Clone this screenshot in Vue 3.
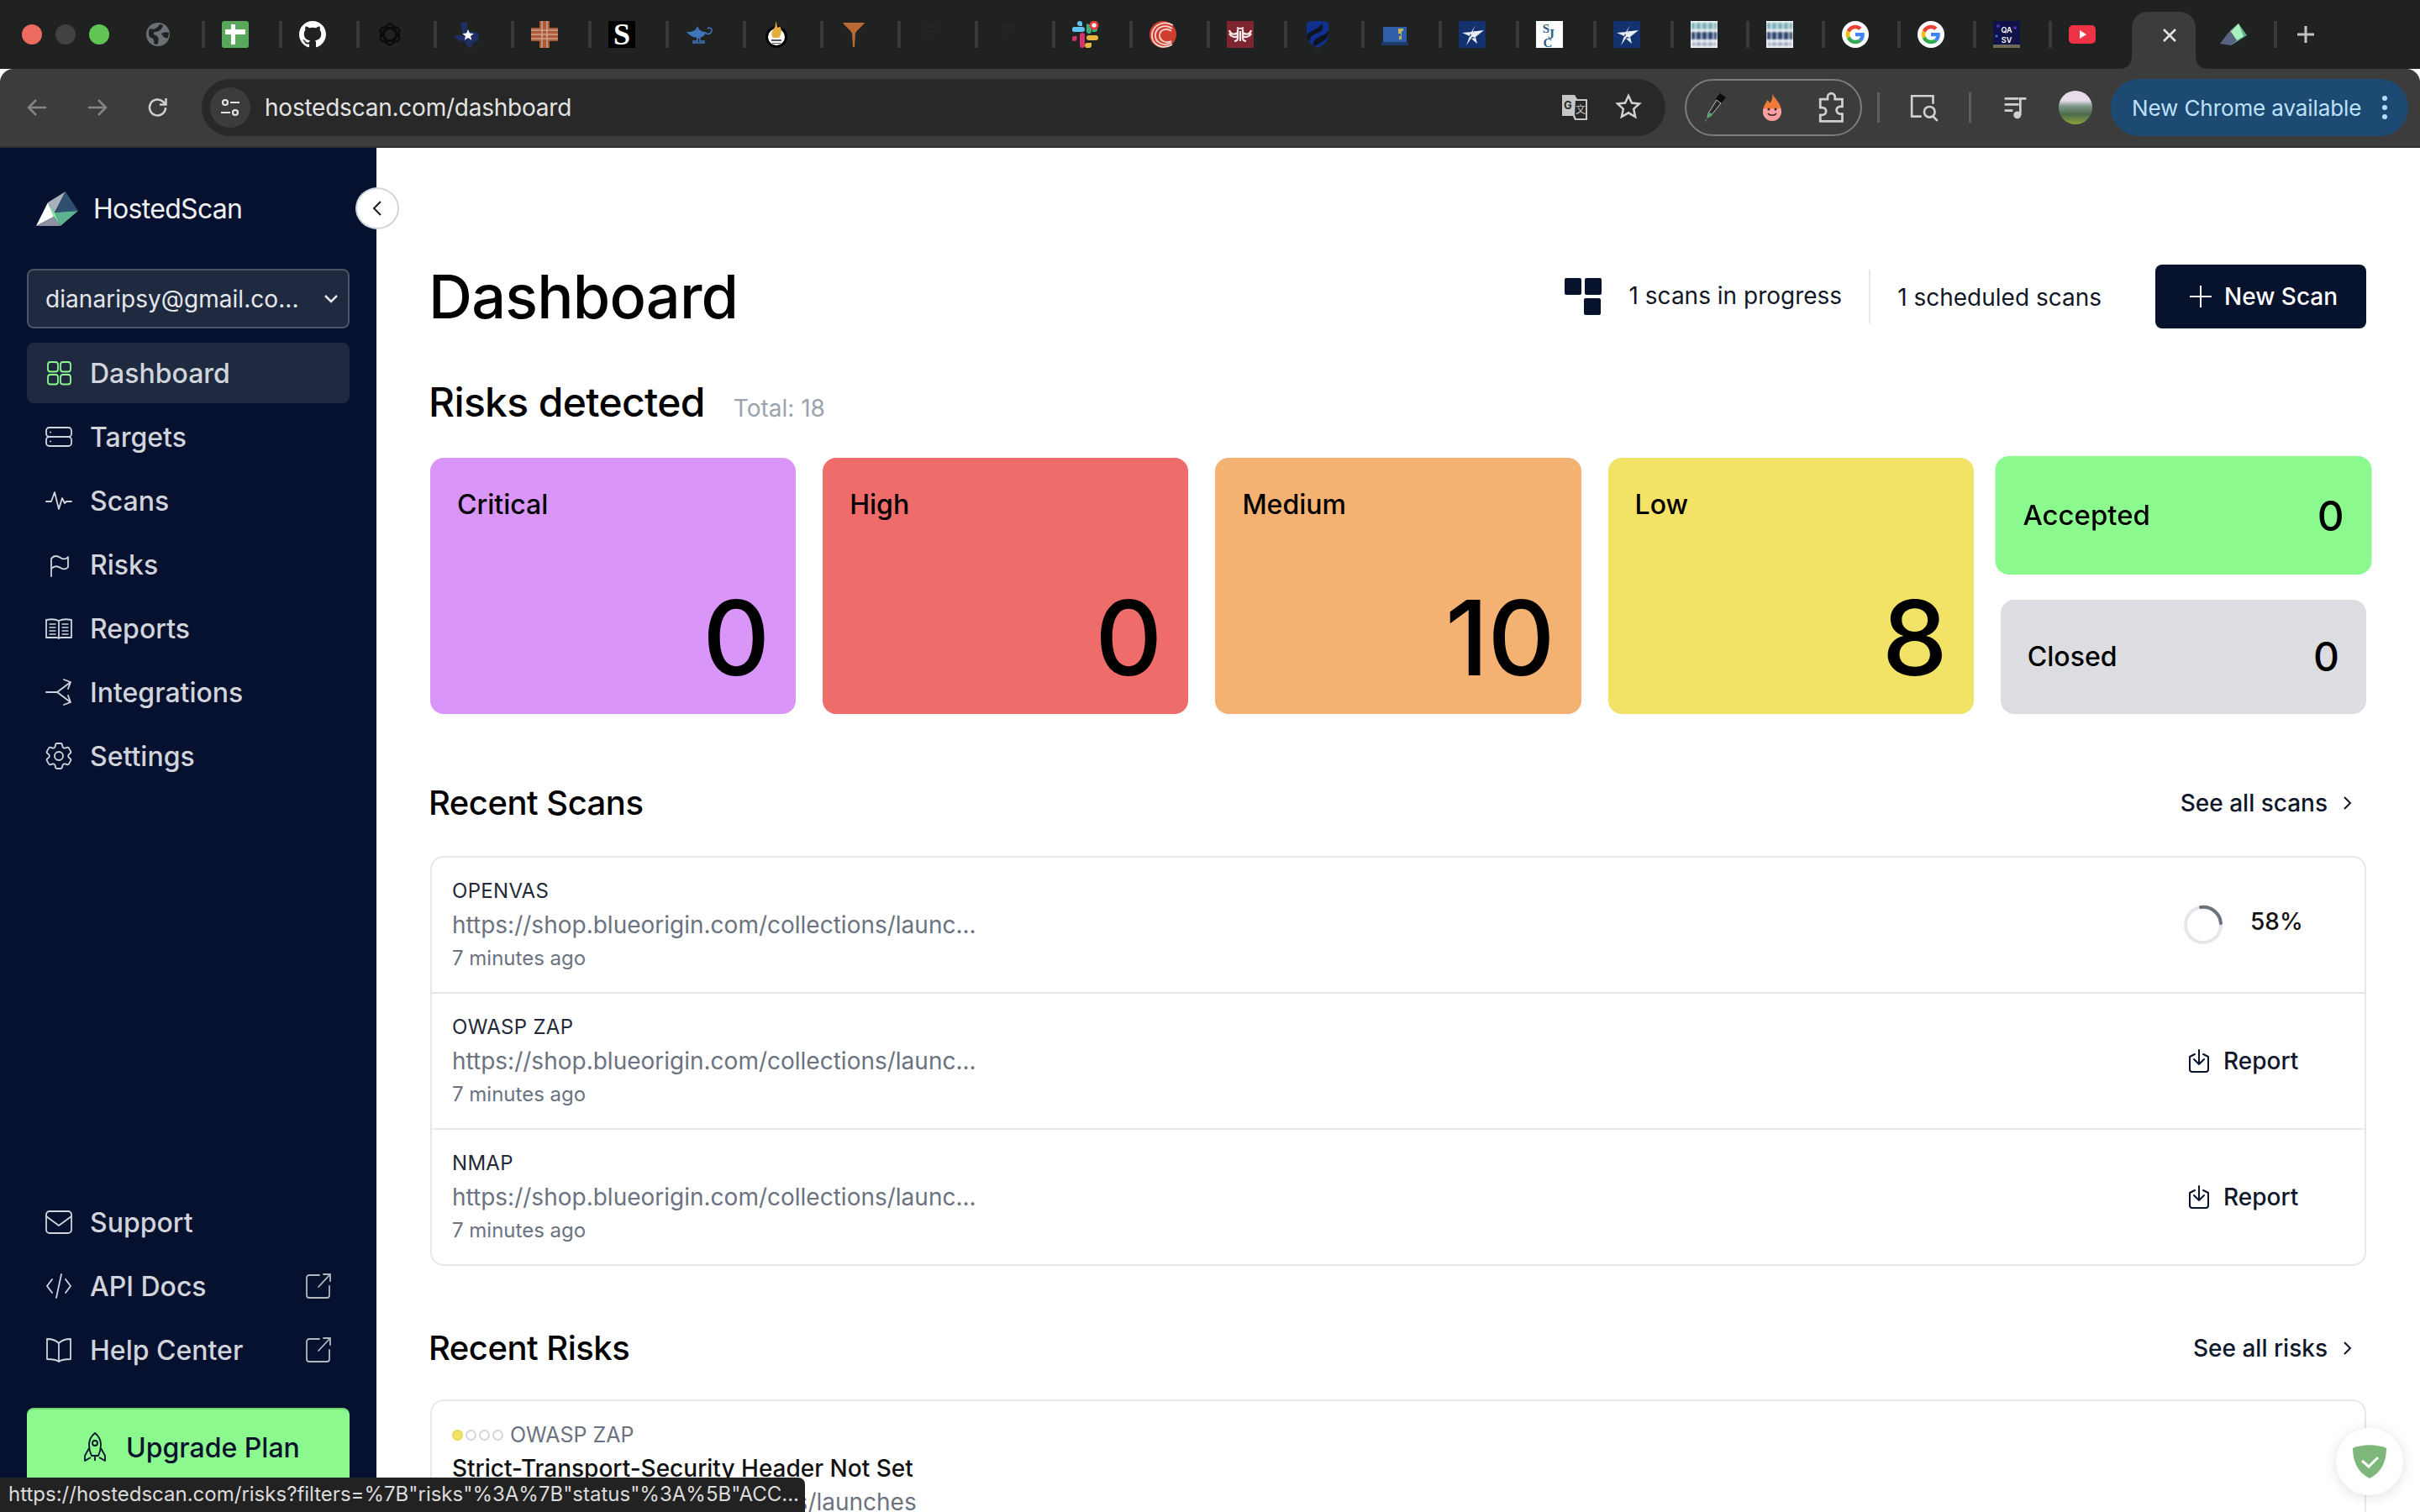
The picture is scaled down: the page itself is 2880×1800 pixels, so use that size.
<template>
  <div class="screen">
    <!-- favicon sprites -->
    <svg class="sprites" width="0" height="0">
      <defs>
        <symbol id="f-globe" viewBox="0 0 32 32">
          <circle cx="16" cy="16" r="14" fill="#6c6f74" />
          <path d="M6 9c5 2 9 0 12-5l4 1c-1 5-6 8-9 8s-3 3 0 4c4 1 5 6 2 11l-4-1c1-3 0-6-3-7s-4-5-2-11z" fill="#202221" />
          <path d="M20 15c3-2 6-2 9-1l-1 6c-2 1-4 0-5-1s-3-3-3-4z" fill="#202221" />
        </symbol>
        <symbol id="f-plus" viewBox="0 0 32 32">
          <rect width="32" height="32" rx="3" fill="#58a95c" />
          <path d="M11 4h5v6h12v6H16v12h-5V16H4v-6h7z" fill="#fff" />
        </symbol>
        <symbol id="f-github" viewBox="0 0 16 16">
          <path fill="#fff" d="M8 0C3.58 0 0 3.58 0 8c0 3.54 2.29 6.53 5.47 7.59.4.07.55-.17.55-.38 0-.19-.01-.82-.01-1.49-2.01.37-2.53-.49-2.69-.94-.09-.23-.48-.94-.82-1.13-.28-.15-.68-.52-.01-.53.63-.01 1.08.58 1.23.82.72 1.21 1.87.87 2.33.66.07-.52.28-.87.51-1.07-1.78-.2-3.64-.89-3.64-3.95 0-.87.31-1.59.82-2.15-.08-.2-.36-1.02.08-2.12 0 0 .67-.21 2.2.82.64-.18 1.32-.27 2-.27.68 0 1.36.09 2 .27 1.53-1.04 2.2-.82 2.2-.82.44 1.1.16 1.92.08 2.12.51.56.82 1.27.82 2.15 0 3.07-1.87 3.75-3.65 3.95.29.25.54.73.54 1.48 0 1.07-.01 1.93-.01 2.2 0 .21.15.46.55.38A8.013 8.013 0 0016 8c0-4.42-3.58-8-8-8z" />
        </symbol>
        <symbol id="f-openai" viewBox="0 0 32 32">
          <g fill="none" stroke="#0b0b0b" stroke-width="2">
            <ellipse cx="16" cy="16" rx="7" ry="12.5" />
            <ellipse cx="16" cy="16" rx="7" ry="12.5" transform="rotate(60 16 16)" />
            <ellipse cx="16" cy="16" rx="7" ry="12.5" transform="rotate(120 16 16)" />
          </g>
        </symbol>
        <symbol id="f-texas" viewBox="0 0 32 32">
          <path d="M8 2h8v9l11 3 3 2-1 7-7 4-1 5-5-2-3-6-3-1-3 2-5-6-2-2h11z" fill="#1f2f66" />
          <path d="M17 10l1.900 4.600 4.900.3-3.800 3.100 1.300 4.800-4.300-2.700-4.200 2.700 1.200-4.800-3.800-3.100 5-.3z" fill="#fff" />
        </symbol>
        <symbol id="f-brick" viewBox="0 0 32 32">
          <path d="M10 0h12v8h10v16H22v8H10v-8H0V8h10z" fill="#ab5a3a" />
          <path d="M0 11h32M0 16h32M0 21h32M13 0v32M19 0v32" stroke="#cfa48c" stroke-width="1.500" />
        </symbol>
        <symbol id="f-s" viewBox="0 0 32 32">
          <rect width="32" height="32" fill="#000" />
          <text x="16" y="28" text-anchor="middle" font-family="Liberation Serif, serif" font-weight="700" font-size="36" fill="#fff">S</text>
        </symbol>
        <symbol id="f-lamp" viewBox="0 0 32 32">
          <path d="M1 13h3c3 0 6-1 8-3l2-4 2 4c2 2 4 3 8 3-1 5-5 7-9 7s-10-2-14-7z" fill="#3f76bb" />
          <path d="M14 20h3v4h5v2H9v-2h5zM24 14c2 3 6 1 7-2s-3-5-5-3" fill="none" stroke="#3f76bb" stroke-width="1.500" />
        </symbol>
        <symbol id="f-torch" viewBox="0 0 32 32">
          <circle cx="16" cy="19" r="13" fill="#000" />
          <circle cx="16" cy="19" r="10" fill="#fff" />
          <path d="M15 0c2 4 1 6 3 8 2-1 2-2 3 0 2 4 0 10-2 12h-7c-3-4-1-8 1-11 2-2 2-5 2-9z" fill="#e2ad3d" />
          <path d="M10 22h12v2H10zM11 26h10v1H11z" fill="#555" />
        </symbol>
        <symbol id="f-tee" viewBox="0 0 32 32">
          <path d="M3 2h26c-3 5-9 8-11 13l-1 15c0 2-2 2-2 0l-1-15C12 10 6 7 3 2z" fill="#b86a35" />
        </symbol>
        <symbol id="f-dark" viewBox="0 0 32 32">
          <path d="M8 6h16M10 12h10M8 18h8" stroke="#242625" stroke-width="3" />
        </symbol>
        <symbol id="f-slack" viewBox="0 0 32 32">
          <path d="M2 13h10a3 3 0 0 0 0-6H4a3 3 0 0 0-2 6z" fill="#5ec3ee" />
          <path d="M9 0a3 3 0 0 0 0 6h3V3a3 3 0 0 0-3-3z" fill="#5ec3ee" />
          <path d="M17 3v9a3 3 0 0 0 6 0V5" fill="#3bb07f" />
          <path d="M25 10h3a3 3 0 0 1 0 6h-3z" fill="#3bb07f" transform="translate(-1 -3)" />
          <circle cx="26" cy="5" r="5.500" fill="#e23b3b" />
          <circle cx="26" cy="5" r="2.600" fill="#fff" />
          <path d="M20 17h8a3 3 0 0 1 0 6h-8a3 3 0 0 1 0-6z" fill="#e8b63e" />
          <path d="M17 26a3 3 0 0 0 3 6 3 3 0 0 0 3-3v-3z" fill="#e8b63e" />
          <path d="M9 17a3 3 0 0 1 6 0v12a3 3 0 0 1-6 0z" fill="#d6336c" />
          <path d="M3 17h3v3a3 3 0 1 1-3-3z" fill="#d6336c" transform="translate(-0.500 1)" />
        </symbol>
        <symbol id="f-lifeline" viewBox="0 0 32 32">
          <circle cx="16" cy="16" r="16" fill="#cf3d2e" />
          <g fill="none" stroke="#f6d9d3" stroke-width="1.800">
            <path d="M28 5C18-1 4 4 3 16s12 19 24 12" />
            <path d="M27 9C19 3 8 7 7 16s9 15 19 10" />
            <path d="M26 12c-5-4-14-2-14 5s8 10 14 7" />
          </g>
        </symbol>
        <symbol id="f-wt" viewBox="0 0 32 32">
          <rect width="32" height="32" fill="#7d2631" />
          <g fill="none" stroke="#f5e9e9" stroke-width="2.200">
            <path d="M3 11c1 5 6 6 10 3M29 11c-1 5-6 6-10 3M3 15c2 4 7 5 10 3M29 15c-2 4-7 5-10 3" />
            <path d="M12 8c2 1 6 1 8 0M13 10v10c0 3-2 4-4 4M19 10v10c0 3 2 4 4 4M16 12v12" />
          </g>
        </symbol>
        <symbol id="f-shield" viewBox="0 0 32 32">
          <path d="M3 2c8-3 18-3 26 0v15c0 7-6 12-13 15C9 29 3 24 3 17z" fill="#10308f" />
          <path d="M3 17C8 10 17 11 21 3c3 6-1 10-7 12-5 2-8 5-7 10-3-3-4-5-4-8zM11 29c-1-7 5-9 11-12 3-1 5-3 7-6 0 9-3 11-8 14-3 2-6 3-8 5z" fill="#10141f" />
        </symbol>
        <symbol id="f-hat" viewBox="0 0 32 32">
          <rect x="2" y="7" width="28" height="18" fill="#2f5fa8" />
          <rect y="25" width="32" height="4" fill="#1c3a68" />
          <path d="M20 9h6v3h-2v10h-3v-4h2v-3h-3z" fill="#c3b25b" />
        </symbol>
        <symbol id="f-star" viewBox="0 0 32 32">
          <rect width="32" height="32" fill="#14316f" />
          <path d="M20 5l-3.500 7.500L30 11l-10 8 2 8-7-6 5-1-4-1-7 10 4-11-9-4 11-1z" fill="#e8edf5" />
          <path d="M14 15l-2 5 3-3z" fill="#14316f" />
        </symbol>
        <symbol id="f-sjc" viewBox="0 0 32 32">
          <rect width="32" height="32" fill="#fff" />
          <text x="12" y="14" text-anchor="middle" font-family="Liberation Serif, serif" font-weight="700" font-size="15" fill="#2c5b8a">S</text>
          <text x="18" y="21" text-anchor="middle" font-family="Liberation Serif, serif" font-weight="700" font-size="16" fill="#2c5b8a">J</text>
          <text x="14" y="31" text-anchor="middle" font-family="Liberation Serif, serif" font-weight="700" font-size="15" fill="#2c5b8a">C</text>
        </symbol>
        <symbol id="f-health" viewBox="0 0 32 32">
          <rect width="32" height="32" fill="#f4f7f8" />
          <g class="blurred">
            <rect x="1" y="2" width="30" height="8" fill="#7fb0ba" />
            <rect x="1" y="13" width="30" height="9" fill="#2e4470" />
            <rect x="2" y="25" width="28" height="5" fill="#a3adc0" />
            <path d="M6 0v32M13 0v32M20 0v32M27 0v32" stroke="#f4f7f8" stroke-width="1.500" />
          </g>
        </symbol>
        <symbol id="f-google" viewBox="-10 -10 68 68">
          <circle cx="24" cy="24" r="34" fill="#fff" />
          <path fill="#ea4335" d="M24 9.500c3.540 0 6.710 1.220 9.210 3.600l6.850-6.850C35.900 2.380 30.470 0 24 0 14.620 0 6.510 5.380 2.560 13.220l7.980 6.190C12.430 13.720 17.740 9.500 24 9.500z" />
          <path fill="#4285f4" d="M46.980 24.550c0-1.570-.15-3.090-.38-4.550H24v9.020h12.940c-.58 2.960-2.260 5.480-4.780 7.180l7.730 6c4.510-4.180 7.090-10.360 7.090-17.650z" />
          <path fill="#fbbc05" d="M10.530 28.590c-.48-1.450-.76-2.990-.76-4.590s.27-3.140.76-4.590l-7.980-6.190C.92 16.460 0 20.120 0 24c0 3.880.92 7.540 2.560 10.780l7.970-6.190z" />
          <path fill="#34a853" d="M24 48c6.480 0 11.930-2.130 15.890-5.810l-7.730-6c-2.150 1.450-4.920 2.300-8.160 2.300-6.260 0-11.570-4.220-13.470-9.910l-7.980 6.190C6.510 42.620 14.620 48 24 48z" />
        </symbol>
        <symbol id="f-qa" viewBox="0 0 32 32">
          <rect width="32" height="32" fill="#10124a" />
          <circle cx="6" cy="6" r="2" fill="#4a2fa8" />
          <circle cx="26" cy="8" r="2" fill="#4a2fa8" />
          <circle cx="4" cy="18" r="1.500" fill="#4f6fd0" />
          <rect y="28" width="32" height="4" fill="#6f6a55" />
          <text x="16" y="14" text-anchor="middle" font-family="Inter, sans-serif" font-weight="600" font-size="9" fill="#fff">QA</text>
          <text x="16" y="26" text-anchor="middle" font-family="Inter, sans-serif" font-weight="600" font-size="9" fill="#fff">SV</text>
        </symbol>
        <symbol id="f-yt" viewBox="0 0 32 32">
          <rect y="5" width="32" height="22" rx="5" fill="#ee3344" />
          <path d="M13 11l8 5-8 5z" fill="#fff" />
        </symbol>
        <symbol id="f-prism" viewBox="0 0 32 32">
          <path d="M22 3l10 14-19 12z" fill="#5fb08f" />
          <path d="M22 3L12 12l8 11 8-5z" fill="#a9f2bb" />
          <path d="M22 3L0 27l12-15z" fill="#8a93a8" />
          <path d="M0 27l13 2 7-6-8-11z" fill="#5a6480" />
        </symbol>
      </defs>
    </svg>

    <!-- browser chrome -->
    <div class="tabstrip">
      <div class="lights">
        <span class="light red"></span>
        <span class="light off"></span>
        <span class="light green"></span>
      </div>
      <div v-for="(t, i) in tabs" :key="i" class="tab" :class="{ narrow: t.narrow, last: t.last }">
        <svg class="fav"><use :href="'#f-' + t.icon" /></svg>
      </div>
      <div class="active-tab">
        <svg class="tab-shape" width="106" height="70" viewBox="0 0 106 70">
          <path d="M0 70c10 0 15-6 15-16V22C15 10 23 2 35 2h36c12 0 20 8 20 20v32c0 10 5 16 15 16z" fill="#3c3c3c" />
        </svg>
        <svg class="tab-close" width="18" height="18" viewBox="0 0 18 18">
          <path d="M2 2l14 14M16 2L2 16" stroke="#e3e3e3" stroke-width="2.500" />
        </svg>
      </div>
      <div class="tab after-active">
        <svg class="fav"><use href="#f-prism" /></svg>
      </div>
      <svg class="newtab" width="22" height="22" viewBox="0 0 22 22">
        <path d="M11 1v20M1 11h20" stroke="#c4c4c4" stroke-width="3" />
      </svg>
    </div>

    <div class="toolbar">
      <div class="tb-btn">
        <svg width="28" height="28" viewBox="0 0 28 28" fill="none" stroke="#858585" stroke-width="2.500"><path d="M25 14H4M13 5l-9 9 9 9" /></svg>
      </div>
      <div class="tb-btn">
        <svg width="28" height="28" viewBox="0 0 28 28" fill="none" stroke="#858585" stroke-width="2.500"><path d="M3 14h21M15 5l9 9-9 9" /></svg>
      </div>
      <div class="tb-btn">
        <svg width="28" height="28" viewBox="0 0 28 28" fill="none" stroke="#d0d0d0" stroke-width="2.500"><path d="M23 14a9.500 9.500 0 1 1-3-7l3 3" /><path d="M23.500 3v7.500H16" /></svg>
      </div>
      <div class="omnibox">
        <div class="site-info">
          <svg width="26" height="26" viewBox="0 0 26 26" fill="none" stroke="#e3e3e3" stroke-width="2.200">
            <circle cx="7" cy="7" r="3" /><path d="M13 7h11M2 19h11" /><circle cx="19" cy="19" r="3" />
          </svg>
        </div>
        <span class="url">hostedscan.com/dashboard</span>
        <div class="omni-right">
          <div class="omni-btn">
            <svg width="34" height="34" viewBox="0 0 34 34">
              <path d="M2 2h15l3 5h12v25H17l-2-5H2z" fill="#c6c6c6" />
              <path d="M17 8h14v23H18l-2-5z" fill="#282828" stroke="#c6c6c6" stroke-width="2" />
              <text x="9" y="19" text-anchor="middle" font-family="Inter, sans-serif" font-weight="700" font-size="13" fill="#282828">G</text>
              <text x="24" y="24" text-anchor="middle" font-family="Noto Sans CJK SC, sans-serif" font-size="12" fill="#c6c6c6">文</text>
            </svg>
          </div>
          <div class="omni-btn">
            <svg width="32" height="32" viewBox="0 0 32 32" fill="none" stroke="#d0d0d0" stroke-width="2.500">
              <path d="M16 3l3.900 8.500 9.100 1-6.800 6.200 1.900 9.300-8.100-4.700L7.900 28l1.900-9.300L3 12.500l9.100-1z" />
            </svg>
          </div>
        </div>
      </div>
      <div class="ext-pill">
        <div class="ext">
          <svg width="30" height="36" viewBox="0 0 30 36">
            <path d="M21 1l7 5-5 6-2 1-5-4 1-3z" fill="#0c0c0c" />
            <path d="M17 9l5 4L10 28l-4 2 1-5z" fill="#2a2a2a" stroke="#bcbcbc" stroke-width="1" />
            <path d="M9 24l3 2-3 3-3 1 1-4zM6 30l-2 5-1-1z" fill="#4fa06a" />
          </svg>
        </div>
        <div class="ext">
          <svg width="28" height="36" viewBox="0 0 28 36">
            <path d="M14 1c2 6 11 11 11 22a11 11 0 0 1-22 0C3 16 7 13 8 9c2 1 3 3 3 4 3-3 4-7 3-12z" fill="#f0793a" />
            <path d="M3 23a11 11 0 0 0 22 0c0-2 0-2-1-4H4c-1 2-1 2-1 4z" fill="#f6a6b4" opacity=".85" />
            <circle cx="10" cy="20" r="1.500" fill="#40231a" /><circle cx="18" cy="20" r="1.500" fill="#40231a" />
            <path d="M9 25c2 3 8 3 10 0" fill="none" stroke="#40231a" stroke-width="1.500" />
          </svg>
        </div>
        <div class="ext puzzle">
          <svg width="40" height="40" viewBox="0 0 32 32" fill="none" stroke="#d0d0d0" stroke-width="2.200">
            <path d="M5 8h7V6a3.500 3.500 0 0 1 7 0v2h7v7h-2a3 3 0 0 0 0 7h2v7H5v-6h2a3.500 3.500 0 0 0 0-7H5z" />
          </svg>
        </div>
      </div>
      <span class="tb-sep first"></span>
      <svg class="lens" width="38" height="38" viewBox="0 0 36 36" fill="none" stroke="#d0d0d0" stroke-width="2.500">
        <path d="M14 28H3V5h24v9" /><circle cx="23" cy="23" r="6" /><path d="M27 28l5 5" />
      </svg>
      <span class="tb-sep second"></span>
      <svg class="music" width="32" height="34" viewBox="0 0 36 36" fill="none" stroke="#d0d0d0" stroke-width="3">
        <path d="M3 6h19M3 14h19M3 22h11" /><path d="M24 28V6h8" /><circle cx="20" cy="28" r="3.500" fill="#d0d0d0" />
      </svg>
      <span class="avatar"></span>
      <div class="update-pill">
        <span>New Chrome available</span>
        <svg width="8" height="30" viewBox="0 0 8 30" fill="#b9dcf8"><circle cx="4" cy="4" r="3" /><circle cx="4" cy="15" r="3" /><circle cx="4" cy="26" r="3" /></svg>
      </div>
    </div>

    <!-- app -->
    <div class="app">
      <aside class="sidebar">
        <div class="brand">
          <svg class="logo" width="50" height="41" viewBox="0 0 50 41">
            <path d="M35 0L14 13l8 12z" fill="#aab0ba" />
            <path d="M35 0L22 25l28-2z" fill="#2f4f6e" />
            <path d="M22 25l28-2-21 18z" fill="#5fb28f" />
            <path d="M14 13l8 12 7 16-8-11z" fill="#86eba6" />
            <path d="M14 13L0 41l21-11z" fill="#fff" />
            <path d="M0 41l21-11 8 11z" fill="#8e91a0" />
          </svg>
          <span class="brand-name">HostedScan</span>
        </div>
        <div class="collapse">
          <svg width="22" height="22" viewBox="0 0 22 22" fill="none" stroke="#111827" stroke-width="2"><path d="M15 3l-8 8 8 8" /></svg>
        </div>

        <div class="account">
          <span>dianaripsy@gmail.co...</span>
          <svg width="20" height="14" viewBox="0 0 20 14" fill="none" stroke="#e5e7eb" stroke-width="2.500"><path d="M3 3l7 7 7-7" /></svg>
        </div>

        <nav class="nav">
          <div v-for="n in navItems" :key="n.label" class="nav-item" :class="{ active: n.active }">
            <svg class="nav-icon" width="32" height="32" viewBox="0 0 32 32" fill="none" stroke="currentColor" stroke-width="1.800" stroke-linecap="round" stroke-linejoin="round">
              <template v-if="n.icon === 'grid'">
                <rect x="3" y="3" width="12" height="11.500" rx="3" /><rect x="18" y="3" width="12" height="11.500" rx="3" />
                <rect x="3" y="18" width="12" height="11.500" rx="3" /><rect x="18" y="18" width="12" height="11.500" rx="3" />
              </template>
              <template v-else-if="n.icon === 'server'">
                <rect x="1" y="5" width="30" height="11" rx="3.500" /><rect x="1" y="16" width="30" height="11" rx="3.500" />
                <path d="M6 10.500h.1M6 21.500h.1" />
              </template>
              <path v-else-if="n.icon === 'pulse'" d="M1 17h6l4-11 5 20 4-13 3 6 2-2h6" />
              <path v-else-if="n.icon === 'flag'" d="M7 30V9c4-5 8-3 11-1s7 2 9-1v12c-2 3-6 3-9 1s-7-3-11 1" />
              <template v-else-if="n.icon === 'book'">
                <path d="M1 6c5-1 11-1 15 1 4-2 10-2 15-1v21H18l-2 1-2-1H1z" /><path d="M16 7v20" />
                <path d="M5 11h7M5 15h7M5 19h7M5 23h7M20 11h7M20 15h7M20 19h7M20 23h7" stroke-width="1.300" />
              </template>
              <path v-else-if="n.icon === 'split'" d="M1 16h13L30 4M22 1l8 3-3 8M14 16l16 12M22 31l8-3-3-8" />
              <template v-else-if="n.icon === 'cog'">
                <g transform="translate(-4 -4) scale(1.667)">
                  <path stroke-width="1.100" d="M9.594 3.940c.09-.542.56-.94 1.110-.94h2.593c.55 0 1.020.398 1.110.94l.213 1.281c.063.374.313.686.645.870.074.040.147.083.22.127.325.196.72.257 1.075.124l1.217-.456a1.125 1.125 0 0 1 1.370.490l1.296 2.247a1.125 1.125 0 0 1-.26 1.431l-1.003.827c-.293.241-.438.613-.43.992a7.723 7.723 0 0 1 0 .255c-.008.378.137.75.43.991l1.004.827c.424.35.534.955.26 1.430l-1.298 2.247a1.125 1.125 0 0 1-1.369.491l-1.217-.456c-.355-.133-.75-.072-1.076.124a6.470 6.470 0 0 1-.22.128c-.331.183-.581.495-.644.869l-.213 1.281c-.09.543-.56.94-1.110.94h-2.594c-.55 0-1.019-.398-1.110-.94l-.213-1.281c-.062-.374-.312-.686-.644-.87a6.520 6.520 0 0 1-.22-.127c-.325-.196-.72-.257-1.076-.124l-1.217.456a1.125 1.125 0 0 1-1.369-.49l-1.297-2.247a1.125 1.125 0 0 1 .26-1.431l1.004-.827c.292-.24.437-.613.43-.991a6.932 6.932 0 0 1 0-.255c.007-.38-.138-.751-.43-.992l-1.004-.827a1.125 1.125 0 0 1-.26-1.430l1.297-2.247a1.125 1.125 0 0 1 1.370-.491l1.216.456c.356.133.751.072 1.076-.124.072-.044.146-.086.22-.128.332-.183.582-.495.644-.869l.214-1.280Z" />
                  <circle cx="12" cy="12" r="3" stroke-width="1.100" />
                </g>
              </template>
            </svg>
            <span>{{ n.label }}</span>
          </div>
        </nav>

        <div class="nav bottom">
          <div v-for="n in bottomItems" :key="n.label" class="nav-item">
            <svg class="nav-icon" width="32" height="32" viewBox="0 0 32 32" fill="none" stroke="currentColor" stroke-width="1.800" stroke-linecap="round" stroke-linejoin="round">
              <template v-if="n.icon === 'mail'">
                <rect x="1" y="3" width="30" height="26" rx="4" /><path d="M1 9l15 11 15-11" />
              </template>
              <path v-else-if="n.icon === 'code'" d="M8 8l-6 8 6 8M24 8l6 8-6 8M19 2l-6 28" />
              <path v-else-if="n.icon === 'openbook'" d="M16 8C12 4 7 3 2 3v24c5 0 10 0 14 3 4-3 9-3 14-3V3c-5 0-10 1-14 5zM16 8v22" />
            </svg>
            <span>{{ n.label }}</span>
            <svg class="ext-link" width="32" height="32" viewBox="0 0 32 32" fill="none" stroke="#b4b8c0" stroke-width="1.800" stroke-linecap="round" stroke-linejoin="round" v-if="n.external">
              <path d="M17 3H5a3 3 0 0 0-3 3v21a3 3 0 0 0 3 3h21a3 3 0 0 0 3-3V16M30 2L16 17M22 2h8v8" />
            </svg>
          </div>
        </div>

        <div class="upgrade">
          <svg width="28" height="36" viewBox="0 0 28 36" fill="none" stroke="#07122c" stroke-width="1.800" stroke-linejoin="round">
            <path d="M14 1c5 4 7 9 7 14 0 5-1 9-3 13h-8c-2-4-3-8-3-13 0-5 2-10 7-14z" />
            <circle cx="14" cy="13" r="3" />
            <path d="M7 19l-5 9v6l7-4M21 19l5 9v6l-7-4M14 28v6" />
          </svg>
          <span>Upgrade Plan</span>
        </div>
      </aside>

      <main class="main">
        <div class="page-head">
          <h1>Dashboard</h1>
          <div class="head-right">
            <svg width="44" height="44" viewBox="0 0 44 44" fill="#07122c">
              <rect x="0" y="0" width="20" height="20" rx="2" />
              <rect x="24" y="0" width="20" height="20" rx="2" />
              <rect x="23" y="24" width="20" height="20" rx="2" />
            </svg>
            <span class="progress-txt">1 scans in progress</span>
            <span class="head-sep"></span>
            <span class="sched-txt">1 scheduled scans</span>
            <button class="new-scan">
              <svg width="28" height="28" viewBox="0 0 28 28" fill="none" stroke="#fff" stroke-width="2"><path d="M14 1v26M1 14h26" /></svg>
              New Scan
            </button>
          </div>
        </div>

        <div class="risks-head">
          <h2>Risks detected</h2>
          <span class="total">Total: 18</span>
        </div>

        <div class="risk-cards">
          <div v-for="c in riskCards" :key="c.label" class="risk-card" :style="{ background: c.color }">
            <div class="risk-label">{{ c.label }}</div>
            <div class="risk-num">{{ c.count }}</div>
          </div>
          <div class="status-col">
            <div class="status-card accepted"><span>Accepted</span><b>0</b></div>
            <div class="status-card closed"><span>Closed</span><b>0</b></div>
          </div>
        </div>

        <div class="section-head scans-head">
          <h3>Recent Scans</h3>
          <span class="see-all">See all scans
            <svg width="16" height="18" viewBox="0 0 16 18" fill="none" stroke="#111827" stroke-width="2"><path d="M4 2l7 7-7 7" /></svg>
          </span>
        </div>

        <div class="list">
          <div v-for="s in scans" :key="s.name" class="scan-row">
            <div class="scan-info">
              <div class="scan-name">{{ s.name }}</div>
              <div class="scan-url">https://shop.blueorigin.com/collections/launc...</div>
              <div class="scan-time">7 minutes ago</div>
            </div>
            <div v-if="s.progress" class="row-action progress">
              <svg width="48" height="48" viewBox="0 0 48 48" fill="none">
                <circle cx="24" cy="24" r="21" stroke="#e5e7eb" stroke-width="4" />
                <path d="M21 3a21 21 0 0 1 24 19" stroke="#6b7280" stroke-width="4" stroke-linecap="round" />
              </svg>
              <span>{{ s.progress }}</span>
            </div>
            <div v-else class="row-action report">
              <svg width="26" height="30" viewBox="0 0 26 30" fill="none" stroke="#07122c" stroke-width="2" stroke-linecap="round" stroke-linejoin="round">
                <path d="M8 7L2 10v15a3 3 0 0 0 3 3h16a3 3 0 0 0 3-3V10l-6-3" />
                <path d="M13 2v17M7 13l6 6 6-6" />
              </svg>
              <span>Report</span>
            </div>
          </div>
        </div>

        <div class="section-head risks-section">
          <h3>Recent Risks</h3>
          <span class="see-all">See all risks
            <svg width="16" height="18" viewBox="0 0 16 18" fill="none" stroke="#111827" stroke-width="2"><path d="M4 2l7 7-7 7" /></svg>
          </span>
        </div>

        <div class="list risk-list">
          <div class="risk-meta">
            <span class="dot on"></span><span class="dot"></span><span class="dot"></span><span class="dot"></span>
            <span class="risk-src">OWASP ZAP</span>
          </div>
          <div class="risk-title">Strict-Transport-Security Header Not Set</div>
          <div class="scan-url">shop.blueorigin.com/collections/launches</div>
        </div>
      </main>
    </div>

    <!-- overlays -->
    <div class="status-bubble">https://hostedscan.com/risks?filters=%7B"risks"%3A%7B"status"%3A%5B"ACC...</div>
    <div class="guard">
      <svg width="42" height="42" viewBox="0 0 42 42">
        <path d="M1 5c13-5 27-5 40 0 0 16-6 29-20 36C7 34 1 21 1 5z" fill="#7db87a" />
        <path d="M12 20l8 7 11-11" fill="none" stroke="#fff" stroke-width="3" />
      </svg>
    </div>
  </div>
</template>

<script setup>
const tabs = [
  { icon: 'globe' },
  { icon: 'plus' },
  { icon: 'github' },
  { icon: 'openai' },
  { icon: 'texas' },
  { icon: 'brick' },
  { icon: 's' },
  { icon: 'lamp' },
  { icon: 'torch' },
  { icon: 'tee' },
  { icon: 'dark' },
  { icon: 'dark' },
  { icon: 'slack' },
  { icon: 'lifeline' },
  { icon: 'wt' },
  { icon: 'shield' },
  { icon: 'hat' },
  { icon: 'star' },
  { icon: 'sjc' },
  { icon: 'star' },
  { icon: 'health', narrow: true },
  { icon: 'health', narrow: true },
  { icon: 'google', narrow: true },
  { icon: 'google', narrow: true },
  { icon: 'qa', narrow: true },
  { icon: 'yt', last: true }
]

const navItems = [
  { label: 'Dashboard', icon: 'grid', active: true },
  { label: 'Targets', icon: 'server' },
  { label: 'Scans', icon: 'pulse' },
  { label: 'Risks', icon: 'flag' },
  { label: 'Reports', icon: 'book' },
  { label: 'Integrations', icon: 'split' },
  { label: 'Settings', icon: 'cog' }
]

const bottomItems = [
  { label: 'Support', icon: 'mail' },
  { label: 'API Docs', icon: 'code', external: true },
  { label: 'Help Center', icon: 'openbook', external: true }
]

const riskCards = [
  { label: 'Critical', count: 0, color: '#d996f8' },
  { label: 'High', count: 0, color: '#ee6c69' },
  { label: 'Medium', count: 10, color: '#f4b272' },
  { label: 'Low', count: 8, color: '#f2e366' }
]

const scans = [
  { name: 'OPENVAS', progress: '58%' },
  { name: 'OWASP ZAP' },
  { name: 'NMAP' }
]
</script>

<style scoped>
.screen {
  position: relative;
  width: 2880px;
  height: 1800px;
  overflow: hidden;
  background: #fff;
  font-family: Inter, "Noto Sans", sans-serif;
  color: #000;
}
.sprites {
  position: absolute;
}
.blurred {
  filter: blur(0.8px);
}

/* tab strip */
.tabstrip {
  display: flex;
  align-items: center;
  height: 82px;
  background: #202221;
}
.lights {
  display: flex;
  gap: 16px;
  width: 150px;
  padding-left: 26px;
  box-sizing: border-box;
}
.light {
  width: 24px;
  height: 24px;
  border-radius: 50%;
}
.light.red { background: #ec6a5e; }
.light.off { background: #424242; }
.light.green { background: #61c554; }
.tab {
  box-sizing: border-box;
  width: 94px;
  margin-right: -2px;
  height: 32px;
  padding-left: 22px;
  border-right: 4px solid #3a3a3a;
  flex-shrink: 0;
}
.tab.narrow {
  width: 92px;
}
.tab.last {
  border-right: 0;
  width: 82px;
  margin-right: 0;
}
.fav {
  display: block;
  width: 32px;
  height: 32px;
}
.active-tab {
  position: relative;
  width: 106px;
  height: 82px;
  flex-shrink: 0;
}
.tab-shape {
  position: absolute;
  left: 0;
  bottom: 0;
}
.tab-close {
  position: absolute;
  left: 51px;
  top: 33px;
}
.tab.after-active {
  width: 82px;
  padding-left: 14px;
  margin-right: 0;
}
.newtab {
  margin-left: 23px;
}

/* toolbar */
.toolbar {
  display: flex;
  align-items: center;
  box-sizing: border-box;
  height: 94px;
  background: #3c3c3c;
  border-bottom: 2px solid #2f2f2f;
  padding-left: 8px;
  border-radius: 16px 16px 0 0;
}
.tb-btn {
  width: 72px;
  display: flex;
  justify-content: center;
}
.omnibox {
  display: flex;
  align-items: center;
  width: 1742px;
  height: 68px;
  margin-left: 16px;
  background: #282828;
  border-radius: 34px;
  flex-shrink: 0;
}
.site-info {
  width: 48px;
  height: 48px;
  margin-left: 10px;
  border-radius: 50%;
  background: #3c3c3c;
  display: flex;
  align-items: center;
  justify-content: center;
}
.url {
  margin-left: 17px;
  font-size: 28px;
  letter-spacing: -0.23px;
  color: #e3e3e3;
}
.omni-right {
  margin-left: auto;
  padding-right: 12px;
  display: flex;
}
.omni-btn {
  width: 64px;
  display: flex;
  justify-content: center;
}
.ext-pill {
  display: flex;
  align-items: center;
  box-sizing: border-box;
  width: 211px;
  height: 68px;
  margin-left: 23px;
  border: 2px solid #7c7c7c;
  border-radius: 34px;
  flex-shrink: 0;
}
.ext {
  width: 69px;
  display: flex;
  justify-content: center;
}
.ext.puzzle {
  margin-left: 2px;
}
.tb-sep {
  width: 3px;
  height: 36px;
  background: #5e5e5e;
  flex-shrink: 0;
}
.tb-sep.first { margin-left: 18px; }
.tb-sep.second { margin-left: 33px; }
.lens { margin-left: 35px; }
.music { margin-left: 37px; }
.avatar {
  width: 40px;
  height: 40px;
  margin-left: 35px;
  border-radius: 50%;
  background: linear-gradient(#e6dcea 0 30%, #7f9a8c 45%, #4c6a4c 70%, #8ba33c 100%);
  flex-shrink: 0;
}
.update-pill {
  display: flex;
  align-items: center;
  box-sizing: border-box;
  width: 354px;
  height: 68px;
  margin-left: 22px;
  padding-left: 25px;
  border-radius: 34px;
  background: #1d4a73;
  color: #bfe0fa;
  font-size: 26px;
  letter-spacing: -0.1px;
  flex-shrink: 0;
}
.update-pill svg {
  margin-left: 24px;
}

/* app layout */
.app {
  display: flex;
  height: 1624px;
}
.sidebar {
  position: relative;
  display: flex;
  flex-direction: column;
  box-sizing: border-box;
  width: 448px;
  padding: 48px 32px 32px;
  background: #061130;
  flex-shrink: 0;
}
.brand {
  display: flex;
  align-items: center;
  height: 48px;
  padding-left: 11px;
  gap: 18px;
}
.brand-name {
  font-size: 32px;
  font-weight: 400;
  letter-spacing: -0.7px;
  color: #f1f2f4;
}
.collapse {
  position: absolute;
  left: 423px;
  top: 47px;
  box-sizing: border-box;
  width: 52px;
  height: 50px;
  border: 2px solid #d1d5db;
  border-radius: 50%;
  background: #fff;
  display: flex;
  align-items: center;
  justify-content: center;
}
.account {
  display: flex;
  align-items: center;
  justify-content: space-between;
  box-sizing: border-box;
  height: 71px;
  margin-top: 48px;
  padding: 0 10px 0 20px;
  background: #1f2a40;
  border: 2px solid #4b5563;
  border-radius: 8px;
  color: #e5e7eb;
  font-size: 28px;
  letter-spacing: 0.05px;
}
.nav {
  display: flex;
  flex-direction: column;
  gap: 4px;
  margin-top: 17px;
}
.nav.bottom {
  margin-top: auto;
}
.nav-item {
  display: flex;
  align-items: center;
  height: 72px;
  padding-left: 22px;
  gap: 21px;
  border-radius: 8px;
  color: #d1d5db;
  font-size: 32px;
  font-weight: 500;
}
.nav-item.active {
  background: #1f2a40;
}
.nav-item.active .nav-icon {
  color: #8cf98f;
}
.nav-icon {
  flex-shrink: 0;
}
.ext-link {
  margin-left: auto;
  margin-right: 21px;
}
.upgrade {
  display: flex;
  align-items: center;
  box-sizing: border-box;
  height: 92px;
  margin-top: 33px;
  padding-left: 67px;
  gap: 23px;
  background: #8cf98f;
  border-top: 2px solid #6fd873;
  border-radius: 8px;
  color: #07122c;
  font-size: 32px;
  font-weight: 500;
}

/* main */
.main {
  flex: 1;
  min-width: 0;
  padding: 139px 64px 0;
}
.page-head {
  display: flex;
  align-items: center;
  justify-content: space-between;
  height: 76px;
}
h1 {
  margin: -2px 0 0 -2px;
  font-size: 72px;
  font-weight: 500;
  letter-spacing: -0.8px;
}
.head-right {
  display: flex;
  align-items: center;
  font-size: 28px;
  color: #111827;
}
.progress-txt {
  margin: -2px 0 0 33px;
}
.head-sep {
  width: 2px;
  height: 64px;
  margin: 0 32px 0 32px;
  background: #e5e7eb;
}
.sched-txt {
  margin-top: 2px;
}
.new-scan {
  display: flex;
  align-items: center;
  gap: 14px;
  width: 251px;
  height: 76px;
  margin-left: 64px;
  padding: 0 0 0 40px;
  border: 0;
  border-radius: 8px;
  background: #07122c;
  color: #fff;
  font: 500 28px Inter, sans-serif;
}
.risks-head {
  display: flex;
  align-items: baseline;
  height: 60px;
  margin-top: 58px;
  gap: 34px;
}
h2 {
  margin: 0 0 0 -2px;
  font-size: 48px;
  line-height: 60px;
  font-weight: 500;
  letter-spacing: -0.65px;
}
.total {
  font-size: 28px;
  color: #9ca3af;
}
.risk-cards {
  display: grid;
  grid-template-columns: repeat(5, 1fr);
  gap: 32px;
  height: 305px;
  margin-top: 36px;
}
.risk-card {
  display: flex;
  flex-direction: column;
  justify-content: space-between;
  box-sizing: border-box;
  padding: 36px 32px 26px;
  border-radius: 16px;
}
.risk-label {
  font-size: 32px;
  line-height: 40px;
  font-weight: 500;
}
.risk-num {
  text-align: right;
  font-size: 124px;
  line-height: 130px;
  font-weight: 450;
  letter-spacing: -1px;
}
.status-col {
  display: flex;
  flex-direction: column;
  gap: 32px;
}
.status-card {
  flex: 1;
  display: flex;
  align-items: center;
  justify-content: space-between;
  padding: 0 32px;
  border-radius: 16px;
  font-size: 32px;
  font-weight: 500;
}
.status-card b {
  font-size: 48px;
  font-weight: 500;
}
.accepted {
  background: #8cf98f;
  transform: scale(1.03);
}
.closed {
  background: #dcdde1;
}
.section-head {
  display: flex;
  align-items: center;
  justify-content: space-between;
  height: 56px;
}
.scans-head {
  margin-top: 77px;
  margin-bottom: 36px;
}
.risks-section {
  margin-top: 69px;
  margin-bottom: 34px;
}
h3 {
  margin: 0 0 0 -2px;
  font-size: 40px;
  font-weight: 500;
  letter-spacing: -0.5px;
}
.see-all {
  display: flex;
  align-items: center;
  gap: 16px;
  margin-top: 2px;
  padding-right: 14px;
  font-size: 28px;
  font-weight: 500;
  color: #0f172a;
}
.list {
  border: 2px solid #e5e7eb;
  border-radius: 16px;
}
.scan-row {
  display: flex;
  align-items: center;
  box-sizing: border-box;
  height: 162px;
  padding-left: 24px;
  border-bottom: 2px solid #e5e7eb;
}
.scan-row:last-child {
  border-bottom: 0;
  height: 160px;
}
.scan-name {
  font-size: 24px;
  line-height: 40px;
  color: #1f2937;
  letter-spacing: 0.3px;
}
.scan-url {
  font-size: 28px;
  line-height: 40px;
  color: #6b7280;
}
.scan-time {
  font-size: 24px;
  line-height: 40px;
  color: #6b7280;
}
.row-action {
  display: flex;
  align-items: center;
  box-sizing: border-box;
  width: 216px;
  margin-left: auto;
  font-size: 28px;
  font-weight: 500;
}
.progress {
  gap: 32px;
  color: #111;
}
.progress span {
  margin-bottom: 8px;
}
.report {
  gap: 16px;
  padding-left: 6px;
  color: #0f172a;
}
.risk-list {
  padding: 20px 24px 0;
  height: 200px;
}
.risk-meta {
  display: flex;
  align-items: center;
  height: 40px;
}
.dot {
  box-sizing: border-box;
  width: 13px;
  height: 13px;
  margin-right: 3px;
  border: 2px solid #d1d5db;
  border-radius: 50%;
}
.dot.on {
  background: #f2e366;
  border-color: #e8d84f;
}
.risk-src {
  margin-left: 5px;
  font-size: 25px;
  color: #6b7280;
}
.risk-title {
  font-size: 28px;
  line-height: 40px;
  font-weight: 500;
  color: #111;
}

/* overlays */
.status-bubble {
  position: absolute;
  left: 0;
  bottom: 0;
  box-sizing: border-box;
  width: 958px;
  height: 41px;
  padding-left: 10px;
  line-height: 40px;
  font-size: 24px;
  white-space: nowrap;
  color: #dcdcdc;
  background: #222;
  border-top-right-radius: 8px;
}
.guard {
  position: absolute;
  left: 2780px;
  top: 1700px;
  width: 80px;
  height: 80px;
  border-radius: 50%;
  background: #fff;
  box-shadow: 0 2px 16px rgba(0, 0, 0, 0.12);
  display: flex;
  align-items: center;
  justify-content: center;
}
</style>

<style>
html, body {
  margin: 0;
  overflow: hidden;
}
</style>
